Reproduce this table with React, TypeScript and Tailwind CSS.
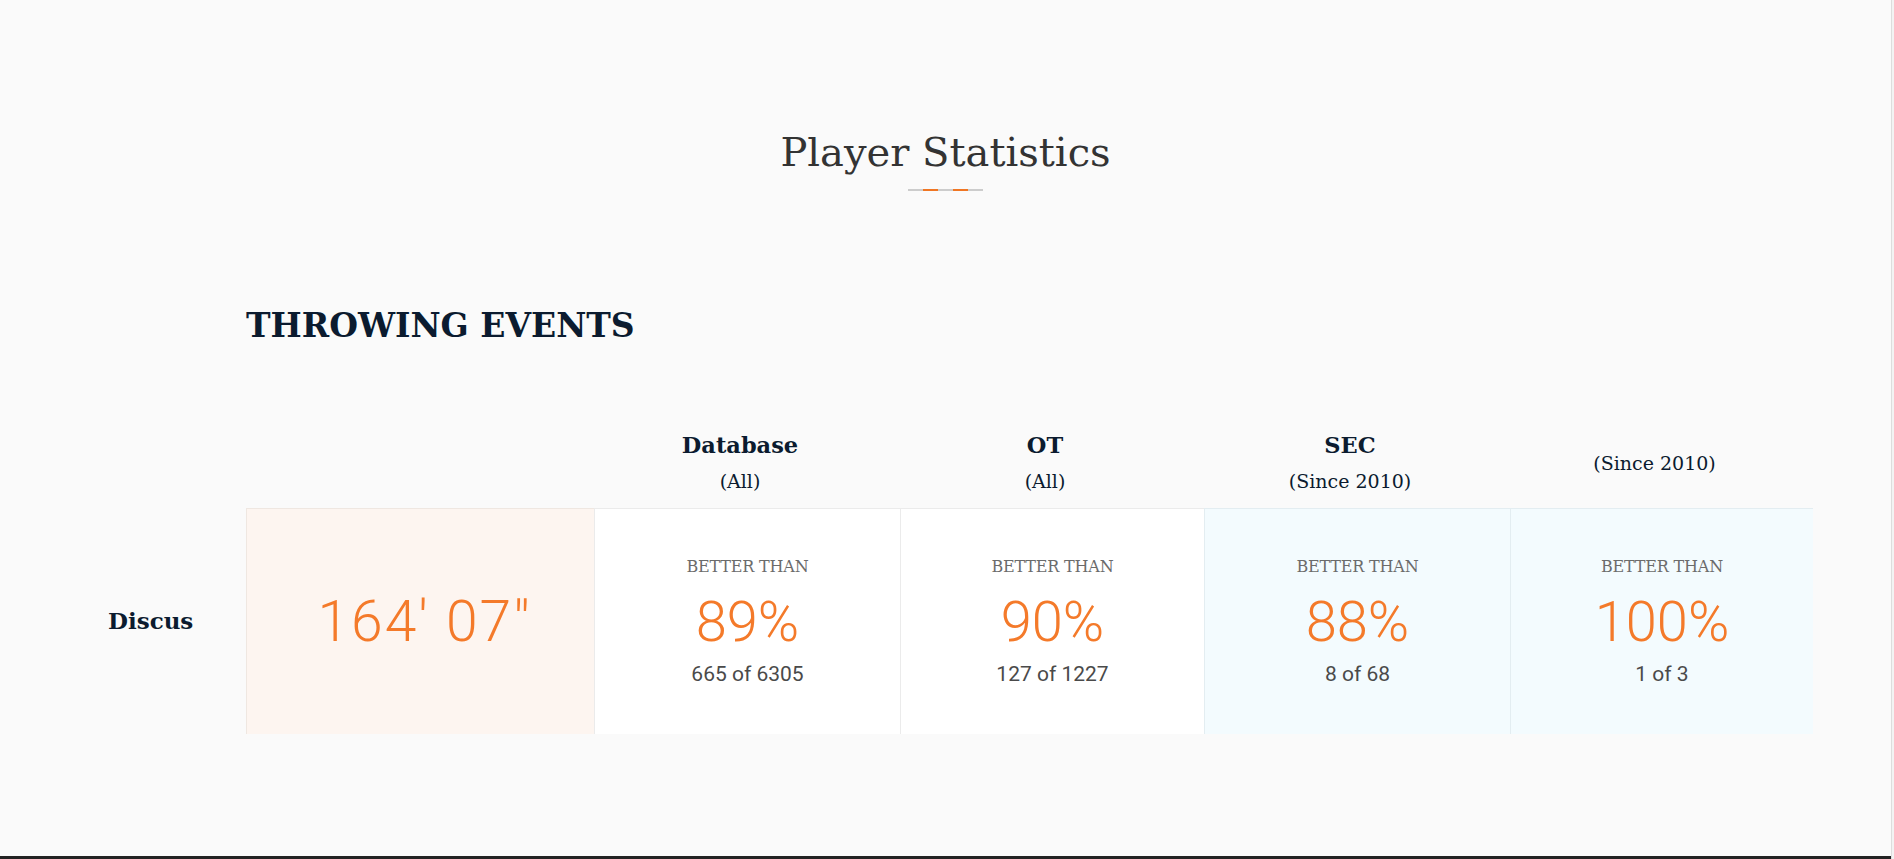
import React from 'react';

type Stat = {
  title?: string;
  sub: string;
  pct: string;
  count: string;
  tone: 'white' | 'blue';
};

const STATS: Stat[] = [
  { title: 'Database', sub: '(All)', pct: '89%', count: '665 of 6305', tone: 'white' },
  { title: 'OT', sub: '(All)', pct: '90%', count: '127 of 1227', tone: 'white' },
  { title: 'SEC', sub: '(Since 2010)', pct: '88%', count: '8 of 68', tone: 'blue' },
  { sub: '(Since 2010)', pct: '100%', count: '1 of 3', tone: 'blue' },
];

const slab = "font-['DejaVu_Serif',serif]";
const sans = "font-['Roboto',sans-serif]";

const StatCell: React.FC<{ stat: Stat }> = ({ stat }) => (
  <div
    className={`flex flex-col items-center justify-center border-t border-l ${
      stat.tone === 'blue' ? 'bg-[#f3fbfe] border-[#e3edf1]' : 'bg-white border-[#ebebeb]'
    }`}
  >
    <span className={`${slab} text-[16px] leading-[20px] text-[#6b6b6b] tracking-[-0.2px]`}>BETTER THAN</span>
    <span className={`${sans} mt-[17px] text-[56px] leading-[56px] font-light text-[#f47a2a]`}>{stat.pct}</span>
    <span className={`${sans} mt-[12px] text-[21px] leading-[24px] text-[#4a4a4a]`}>{stat.count}</span>
  </div>
);

export default function App() {
  return (
    <div className="flex h-[859px] w-full overflow-hidden bg-[#fafafa]">
      <div className="flex flex-1 flex-col">
        <main className="flex-1 pt-[128px]">
          {/* Section title */}
          <div className="flex flex-col items-center">
            <h1 className={`${slab} text-[40px] leading-[48px] text-[#333333]`}>Player Statistics</h1>
            <div className="mt-[13px] flex h-[2px]">
              <span className="w-[15px] bg-[#cccccc]" />
              <span className="w-[15px] bg-[#f07623]" />
              <span className="w-[15px] bg-[#cccccc]" />
              <span className="w-[15px] bg-[#f07623]" />
              <span className="w-[15px] bg-[#cccccc]" />
            </div>
          </div>

          <div className="ml-[75px] mt-[115px] w-[1738px]">
            <h2 className={`${slab} pl-[171px] text-[33px] leading-[40px] font-bold text-[#0b1b2f]`}>
              THROWING EVENTS
            </h2>

            {/* Header row */}
            <div className="mt-[72px] grid h-[90px] grid-cols-[171px_348px_306px_304px_306px_303px] items-center">
              <div />
              <div />
              {STATS.map((s, i) => (
                <div key={i} className={`${slab} flex flex-col items-center pr-[14px] text-[#0b1b2f]`}>
                  {s.title && <span className="text-[22.5px] leading-[30px] font-bold">{s.title}</span>}
                  <span className={`text-[19px] leading-[30px] ${s.title ? 'mt-[6px]' : ''}`}>{s.sub}</span>
                </div>
              ))}
            </div>

            {/* Discus row */}
            <div className="grid h-[226px] grid-cols-[171px_348px_306px_304px_306px_303px]">
              <div className={`${slab} flex items-center pl-[33px] text-[23px] font-bold text-[#0b1b2f]`}>Discus</div>
              <div className="flex items-center justify-center border-t border-l border-[#efe7e1] bg-[#fdf5f0] pl-[8px]">
                <span className={`${sans} text-[57px] leading-[56px] font-light tracking-[2px] text-[#f47a2a]`}>164' 07"</span>
              </div>
              {STATS.map((s, i) => (
                <StatCell key={i} stat={s} />
              ))}
            </div>
          </div>
        </main>
        <footer className="h-[3px] bg-[#222222]" />
      </div>
      <div className="w-[3px] border-l border-[#dddddd] bg-[#f3f3f3]" />
    </div>
  );
}
